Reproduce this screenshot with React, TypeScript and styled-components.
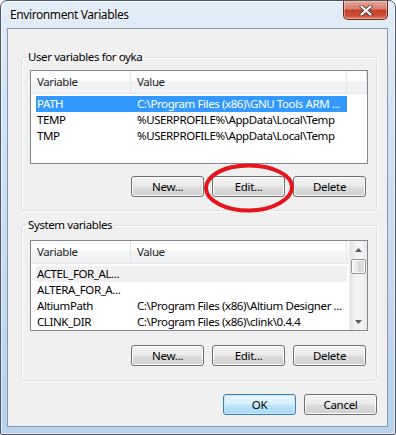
import React from 'react';
import styled, { createGlobalStyle } from 'styled-components';

const GlobalStyle = createGlobalStyle`
  html, body {
    margin: 0;
    padding: 0;
    background: #ffffff;
  }
  body {
    font-family: "Noto Sans", "Liberation Sans", sans-serif;
    font-size: 11.5px;
    letter-spacing: -0.4px;
    color: #000000;
  }
  * {
    box-sizing: border-box;
  }
`;

const Window = styled.div`
  position: relative;
  width: 396px;
  height: 435px;
  display: flex;
  flex-direction: column;
  border: 1px solid #4a5868;
  border-radius: 7px 7px 2px 2px;
  background: linear-gradient(180deg, #e3edf8 0%, #d3e3f3 25%, #c4d8ee 70%, #b9d1ea 100%);
  box-shadow: inset 0 0 0 1px rgba(255, 255, 255, 0.6);
  overflow: hidden;
`;

const TitleBar = styled.div`
  height: 27px;
  display: flex;
  align-items: flex-start;
  padding-left: 9px;
  flex-shrink: 0;
`;

const Title = styled.div`
  margin-top: 6px;
  font-size: 12px;
  line-height: 16px;
  color: #000;
  text-shadow: 0 0 6px rgba(255, 255, 255, 0.95), 0 0 2px rgba(255, 255, 255, 0.9);
`;

const CloseButton = styled.button`
  margin-left: auto;
  margin-right: 7px;
  width: 45px;
  height: 19px;
  padding: 0;
  border: 1px solid #6b2a20;
  border-top: none;
  border-radius: 0 0 5px 5px;
  background: linear-gradient(180deg, #e8a597 0%, #d8806d 45%, #c0402a 50%, #cc4e33 80%, #de7c62 100%);
  box-shadow: inset 0 0 0 1px rgba(255, 220, 210, 0.45);
  display: flex;
  align-items: center;
  justify-content: center;
`;

const Client = styled.div`
  flex: 1;
  margin: 0 7px 7px 6px;
  background: #f0f0f0;
  border: 1px solid #8497ad;
  display: flex;
  flex-direction: column;
  padding: 0 10px 0 13px;
`;

const Group = styled.fieldset<{ $top: number; $padTop: number; $padBottom: number }>`
  margin: ${(p) => p.$top}px 0 0 0;
  padding: ${(p) => p.$padTop}px 8px ${(p) => p.$padBottom}px 8px;
  border: 1px solid #d5dfe5;
  border-radius: 3px;
  box-shadow: inset 1px 1px 0 #ffffff, 1px 1px 0 #ffffff;
  min-width: 0;
`;

const Legend = styled.legend`
  margin-left: -4px;
  padding: 0 2px;
  line-height: 16px;
`;

const List = styled.div<{ $height: number }>`
  height: ${(p) => p.$height}px;
  border: 1px solid #828790;
  background: #ffffff;
  display: flex;
  overflow: hidden;
`;

const ListMain = styled.div`
  flex: 1;
  min-width: 0;
  display: flex;
  flex-direction: column;
`;

const Header = styled.div`
  height: 23px;
  flex-shrink: 0;
  display: grid;
  grid-template-columns: 100px 216px 1fr;
  background: linear-gradient(180deg, #ffffff 0%, #ffffff 45%, #f3f4f6 45%, #f1f2f4 100%);
  border-bottom: 1px solid #e5e6e8;
`;

const HeaderCell = styled.div`
  padding-left: 6px;
  line-height: 22px;
  border-right: 1px solid #e3e5e8;
  color: #1e1e1e;
  white-space: nowrap;
  overflow: hidden;
`;

const Rows = styled.div`
  padding-top: 2px;
  display: flex;
  flex-direction: column;
`;

const Row = styled.div<{ $state?: 'active' | 'inactive' }>`
  margin-left: 5px;
  width: 311px;
  height: 16px;
  flex-shrink: 0;
  display: grid;
  grid-template-columns: 101px 1fr;
  line-height: 16px;
  white-space: nowrap;
  background: ${(p) => (p.$state === 'active' ? '#3399ff' : p.$state === 'inactive' ? '#f0f0f0' : 'transparent')};
  color: ${(p) => (p.$state === 'active' ? '#ffffff' : '#000000')};
`;

const Cell = styled.div<{ $first?: boolean }>`
  padding-left: ${(p) => (p.$first ? '1px' : '0')};
  overflow: hidden;
`;

const ScrollBar = styled.div`
  width: 18px;
  flex-shrink: 0;
  display: flex;
  flex-direction: column;
  align-items: center;
  background: linear-gradient(90deg, #e3e3e3 0%, #f2f2f2 30%, #f4f4f4 70%, #e8e8e8 100%);
  border-left: 1px solid #ececec;
`;

const ArrowBox = styled.div`
  width: 17px;
  height: 17px;
  display: flex;
  align-items: center;
  justify-content: center;
  flex-shrink: 0;
`;

const Thumb = styled.div`
  margin-top: 1px;
  width: 15px;
  height: 15px;
  border: 1px solid #959595;
  border-radius: 2px;
  background: linear-gradient(90deg, #f3f3f3 0%, #e8e8e8 50%, #d6d6d6 50%, #e0e0e0 100%);
  box-shadow: inset 0 0 0 1px #fbfbfb;
`;

const Spacer = styled.div`
  flex: 1;
`;

const ButtonRow = styled.div<{ $top: number; $right: number }>`
  margin-top: ${(p) => p.$top}px;
  padding-right: ${(p) => p.$right}px;
  display: flex;
  justify-content: flex-end;
  gap: 8px;
`;

const Button = styled.button<{ $default?: boolean }>`
  width: 73px;
  height: 21px;
  padding: 0;
  font-family: "Noto Sans", "Liberation Sans", sans-serif;
  font-size: 11.5px;
  letter-spacing: -0.3px;
  line-height: 18px;
  color: #000;
  border: 1px solid ${(p) => (p.$default ? '#3c7fb1' : '#707070')};
  border-radius: 3px;
  background: ${(p) =>
    p.$default
      ? 'linear-gradient(180deg, #eaf6fd 0%, #d9f0fc 48%, #bee6fd 52%, #a7d9f5 100%)'
      : 'linear-gradient(180deg, #f2f2f2 0%, #ebebeb 48%, #dddddd 52%, #cfcfcf 100%)'};
  box-shadow: inset 0 0 0 1px ${(p) => (p.$default ? '#c9e8f9' : '#fbfbfb')};
`;

const Annotation = styled.svg`
  position: absolute;
  left: 200px;
  top: 158px;
  width: 96px;
  height: 56px;
  pointer-events: none;
`;

type Variable = { name: string; value: string; state?: 'active' | 'inactive' };

const userVars: Variable[] = [
  { name: 'PATH', value: 'C:\\Program Files (x86)\\GNU Tools ARM ...', state: 'active' },
  { name: 'TEMP', value: '%USERPROFILE%\\AppData\\Local\\Temp' },
  { name: 'TMP', value: '%USERPROFILE%\\AppData\\Local\\Temp' },
];

const systemVars: Variable[] = [
  { name: 'ACTEL_FOR_AL...', value: '', state: 'inactive' },
  { name: 'ALTERA_FOR_A...', value: '' },
  { name: 'AltiumPath', value: 'C:\\Program Files (x86)\\Altium Designer ...' },
  { name: 'CLINK_DIR', value: 'C:\\Program Files (x86)\\clink\\0.4.4' },
];

const VarRows = ({ items }: { items: Variable[] }) => (
  <Rows>
    {items.map((v) => (
      <Row key={v.name} $state={v.state}>
        <Cell $first>{v.name}</Cell>
        <Cell>{v.value}</Cell>
      </Row>
    ))}
  </Rows>
);

const ListHeader = ({ filler }: { filler: boolean }) => (
  <Header>
    <HeaderCell>Variable</HeaderCell>
    <HeaderCell>Value</HeaderCell>
    {filler && <HeaderCell />}
  </Header>
);

const CloseGlyph = () => (
  <svg width="14" height="11" viewBox="0 0 14 11">
    <path d="M2.5 1.5 L11.5 9.5 M11.5 1.5 L2.5 9.5" stroke="#5a3a36" strokeWidth="4" strokeLinecap="round" />
    <path d="M2.5 1.5 L11.5 9.5 M11.5 1.5 L2.5 9.5" stroke="#ffffff" strokeWidth="2.2" strokeLinecap="round" />
  </svg>
);

const UpArrow = () => (
  <svg width="7" height="4" viewBox="0 0 7 4">
    <path d="M0 4 L3.5 0 L7 4 Z" fill="#5d5d5d" />
  </svg>
);

const DownArrow = () => (
  <svg width="7" height="4" viewBox="0 0 7 4">
    <path d="M0 0 L7 0 L3.5 4 Z" fill="#5d5d5d" />
  </svg>
);

export default function App() {
  return (
    <>
      <GlobalStyle />
      <Window>
        <TitleBar>
          <Title>Environment Variables</Title>
          <CloseButton aria-label="Close">
            <CloseGlyph />
          </CloseButton>
        </TitleBar>

        <Client>
          <Group $top={20} $padTop={5} $padBottom={13}>
            <Legend>User variables for oyka</Legend>
            <List $height={94}>
              <ListMain>
                <ListHeader filler />
                <VarRows items={userVars} />
              </ListMain>
            </List>
            <ButtonRow $top={12} $right={2}>
              <Button>New...</Button>
              <Button>Edit...</Button>
              <Button>Delete</Button>
            </ButtonRow>
          </Group>

          <Group $top={6} $padTop={7} $padBottom={14}>
            <Legend>System variables</Legend>
            <List $height={91}>
              <ListMain>
                <ListHeader filler={false} />
                <VarRows items={systemVars} />
              </ListMain>
              <ScrollBar>
                <ArrowBox>
                  <UpArrow />
                </ArrowBox>
                <Thumb />
                <Spacer />
                <ArrowBox>
                  <DownArrow />
                </ArrowBox>
              </ScrollBar>
            </List>
            <ButtonRow $top={14} $right={2}>
              <Button>New...</Button>
              <Button>Edit...</Button>
              <Button>Delete</Button>
            </ButtonRow>
          </Group>

          <ButtonRow $top={13} $right={0}>
            <Button $default>OK</Button>
            <Button>Cancel</Button>
          </ButtonRow>
        </Client>

        <Annotation viewBox="0 0 96 56">
          <path
            d="M5 29 C5 16.6 24.3 6.5 48 6.5 C71.7 6.5 91 16 91 28 C91 40 71.7 51.5 48 51.5 C24.3 51.5 5 41.4 5 29 Z"
            fill="none"
            stroke="#e5141d"
            strokeWidth="4"
          />
          <path d="M9 20 C15 12 27 8 38 7" fill="none" stroke="#e5141d" strokeWidth="3.5" strokeLinecap="round" />
        </Annotation>
      </Window>
    </>
  );
}
